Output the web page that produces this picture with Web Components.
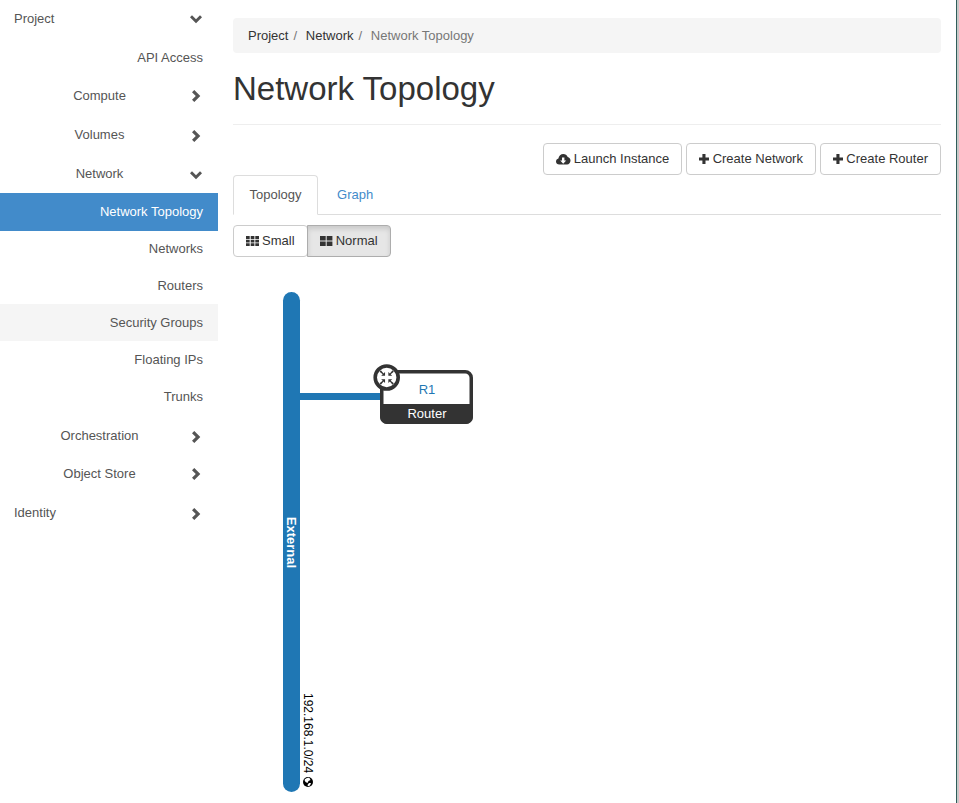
<!DOCTYPE html>
<html>
<head>
<meta charset="utf-8">
<title>Network Topology</title>
<style>
  html, body { margin: 0; height: 100%; background: #fff; }
  body { font: 13px/18.57px "Liberation Sans", Arial, sans-serif; color: #333; overflow: hidden; }
</style>
</head>
<body>
<app-shell>
  <side-nav slot="side">
    <nav-row kind="top" icon="down" h="38">Project</nav-row>
    <nav-row kind="leaf" h="39" nudge="2">API Access</nav-row>
    <nav-row kind="group" icon="right" h="38">Compute</nav-row>
    <nav-row kind="group" icon="right" h="39" nudge="2">Volumes</nav-row>
    <nav-row kind="group" icon="down" h="39" nudge="2">Network</nav-row>
    <nav-row kind="leaf" active h="38">Network Topology</nav-row>
    <nav-row kind="leaf" h="36">Networks</nav-row>
    <nav-row kind="leaf" h="37" nudge="2">Routers</nav-row>
    <nav-row kind="leaf" hover h="37" nudge="2">Security Groups</nav-row>
    <nav-row kind="leaf" h="37" nudge="2">Floating IPs</nav-row>
    <nav-row kind="leaf" h="37" nudge="2">Trunks</nav-row>
    <nav-row kind="group" icon="right" h="39" nudge="4">Orchestration</nav-row>
    <nav-row kind="group" icon="right" h="38" nudge="2">Object Store</nav-row>
    <nav-row kind="top" icon="right" h="39" nudge="4">Identity</nav-row>
  </side-nav>
  <bread-crumb><span>Project</span><span>Network</span><span>Network Topology</span></bread-crumb>
  <page-title>Network Topology</page-title>
  <action-bar>
    <action-button icon="cloud">Launch Instance</action-button>
    <action-button icon="plus">Create Network</action-button>
    <action-button icon="plus">Create Router</action-button>
  </action-bar>
  <tab-strip></tab-strip>
  <size-toggle></size-toggle>
  <topology-canvas></topology-canvas>
</app-shell>

<script>
// name: [width, height, path]
const ICONS = {
  down: [14, 14, '<path d="M1 5.200 3 3.200 7 7.200 11 3.200 13 5.200 7 11.200z"/>'],
  right: [14, 14, '<path d="M5.300 1 3 3.200 6.800 7 3 10.800 5.300 13 11.300 7z"/>'],
  plus: [9.800, 14, '<path d="M3.400 2h3.100v3.500h3.500v3H6.500V12H3.400V8.500H0v-3h3.400z"/>'],
  cloud: [14.500, 14, '<path fill-rule="evenodd" d="M3.300 12.500C1.400 12.500 0 11.100 0 9.400c0-1.500 1-2.700 2.400-3C2.800 3.900 4.800 2 7.300 2c2 0 3.700 1.200 4.400 3 1.600.2 2.800 1.700 2.800 3.500 0 2.200-1.500 4-3.400 4zM6 5.500v3H4.200l3 3.200 3-3.200H8.400v-3z"/>'],
  small: [12.500, 14, '<path d="M0 2h3.700v3H0zM4.700 2h3.700v3H4.700zM9.300 2H13v3H9.300zM0 5.700h3.700v2.800H0zM4.700 5.700h3.700v2.800H4.700zM9.300 5.700H13v2.800H9.300zM0 9.200h3.700V12H0zM4.700 9.200h3.700V12H4.700zM9.300 9.200H13V12H9.300z"/>'],
  normal: [12.500, 14, '<path d="M0 2h5.700v4.500H0zM6.700 2h5.700v4.500H6.700zM0 7.500h5.700V12H0zM6.700 7.500h5.700V12H6.700z"/>']
};

function icon(name) {
  const [w, h, body] = ICONS[name];
  return `<svg width="${w}" height="${h}" viewBox="0 0 ${w} ${h}" fill="currentColor">${body}</svg>`;
}

class AppShell extends HTMLElement {
  constructor() {
    super();
    this.attachShadow({ mode: "open" }).innerHTML = `
      <style>
        :host {
          display: grid;
          grid-template-columns: 218px 1fr;
          height: 803px;
          width: 959px;
          box-sizing: border-box;
          border-right: 2px solid #c8c8c8;
        }

        main {
          padding: 18px 15px 0;
          min-width: 0;
          border-right: 1px solid #2f5d5a;
        }
      </style>
      <slot name="side"></slot>
      <main><slot></slot></main>
    `;
  }
}

class SideNav extends HTMLElement {
  constructor() {
    super();
    this.attachShadow({ mode: "open" }).innerHTML = `
      <style>
        :host {
          display: flex;
          flex-direction: column;
        }
      </style>
      <slot></slot>
    `;
  }
}

class NavRow extends HTMLElement {
  constructor() {
    super();
    this.attachShadow({ mode: "open" }).innerHTML = `
      <style>
        :host {
          display: flex;
          align-items: center;
          box-sizing: border-box;
          padding: 0 15px 0 14px;
          color: #555;
          flex: none;
        }

        :host([kind="leaf"]) {
          justify-content: flex-end;
        }

        :host([kind="group"]) .label {
          flex: 1;
          text-align: center;
          margin-right: -10px;
        }

        :host([kind="top"]) .label {
          flex: 1;
        }

        :host([active]) {
          background: #428bca;
          color: #fff;
        }

        :host([hover]) {
          background: #f5f5f5;
        }

        svg {
          display: block;
          margin-left: 14px;
        }
      </style>
      <span class="label"><slot></slot></span>
    `;
  }

  connectedCallback() {
    this.style.height = this.getAttribute("h") + "px";
    this.style.paddingTop = (this.getAttribute("nudge") || 0) + "px";
    const name = this.getAttribute("icon");
    if (name && !this.shadowRoot.querySelector("svg")) {
      this.shadowRoot.querySelector(".label").insertAdjacentHTML("afterend", icon(name));
    }
  }
}

class BreadCrumb extends HTMLElement {
  constructor() {
    super();
    this.attachShadow({ mode: "open" }).innerHTML = `
      <style>
        :host {
          display: flex;
          height: 35px;
          box-sizing: border-box;
          align-items: center;
          padding: 2px 15px 0;
          background: #f5f5f5;
          border-radius: 4px;
        }

        ::slotted(span) {
          color: #333;
        }

        ::slotted(span:not(:last-child))::after {
          content: "/";
          color: #777;
          padding: 0 8.700px 0 5px;
        }

        ::slotted(span:last-child) {
          color: #777;
        }
      </style>
      <slot></slot>
    `;
  }
}

class PageTitle extends HTMLElement {
  constructor() {
    super();
    this.attachShadow({ mode: "open" }).innerHTML = `
      <style>
        :host {
          display: block;
          font-size: 33px;
          line-height: 36px;
          padding: 18px 0 17px;
          border-bottom: 1px solid #eee;
          color: #333;
        }
      </style>
      <slot></slot>
    `;
  }
}

class ActionBar extends HTMLElement {
  constructor() {
    super();
    this.attachShadow({ mode: "open" }).innerHTML = `
      <style>
        :host {
          display: flex;
          justify-content: flex-end;
          gap: 4px;
          margin-top: 18px;
        }
      </style>
      <slot></slot>
    `;
  }
}

class ActionButton extends HTMLElement {
  constructor() {
    super();
    this.attachShadow({ mode: "open" }).innerHTML = `
      <style>
        :host {
          display: inline-flex;
          align-items: center;
          gap: 3.6px;
          height: 32px;
          box-sizing: border-box;
          padding: 0 12px;
          border: 1px solid #ccc;
          border-radius: 4px;
          background: #fff;
          color: #333;
          white-space: nowrap;
        }

        :host([active]) {
          background: #e6e6e6;
          border-color: #adadad;
          box-shadow: inset 0 3px 5px rgba(0, 0, 0, .125);
        }

        svg {
          display: block;
          flex: none;
          overflow: visible;
        }
      </style>
      <slot></slot>
    `;
  }

  connectedCallback() {
    const name = this.getAttribute("icon");
    if (name && !this.shadowRoot.querySelector("svg")) {
      this.shadowRoot.querySelector("slot").insertAdjacentHTML("beforebegin", icon(name));
    }
  }
}

class TabStrip extends HTMLElement {
  constructor() {
    super();
    this.attachShadow({ mode: "open" }).innerHTML = `
      <style>
        :host {
          display: flex;
          height: 40px;
          box-sizing: border-box;
          border-bottom: 1px solid #ddd;
        }

        div {
          height: 40px;
          box-sizing: border-box;
          padding: 10px 15.500px;
          margin-right: 2.500px;
          border: 1px solid transparent;
          border-radius: 4px 4px 0 0;
          color: #428bca;
        }

        .on {
          color: #555;
          background: #fff;
          border-color: #ddd #ddd #fff;
        }
      </style>
      <div class="on">Topology</div>
      <div>Graph</div>
    `;
  }
}

class SizeToggle extends HTMLElement {
  constructor() {
    super();
    this.attachShadow({ mode: "open" }).innerHTML = `
      <style>
        :host {
          display: flex;
          margin-top: 10px;
        }

        action-button:first-child {
          border-radius: 4px 0 0 4px;
        }

        action-button:last-child {
          border-radius: 0 4px 4px 0;
          margin-left: -1px;
        }
      </style>
      <action-button icon="small">Small</action-button>
      <action-button icon="normal" active>Normal</action-button>
    `;
  }
}

// free canvas, viewBox uses page coordinates (canvas sits at 233,257)
class TopologyCanvas extends HTMLElement {
  constructor() {
    super();
    this.attachShadow({ mode: "open" }).innerHTML = `
      <style>
        :host {
          display: block;
        }

        svg {
          display: block;
          overflow: visible;
        }

        text {
          font-family: "Liberation Sans", Arial, sans-serif;
        }
      </style>
      <svg width="708" height="546" viewBox="233 257 708 546">
        <rect x="283" y="292" width="17" height="500" rx="8.500" fill="#1f77b4"/>
        <text transform="translate(287 542.500) rotate(90)" text-anchor="middle" font-size="13" font-weight="bold" fill="#fff">External</text>
        <text transform="translate(303.500 693) rotate(90)" font-size="12" fill="#000">192.168.1.0/24</text>
        <circle cx="308" cy="782" r="5" fill="#000"/>
        <path d="M304.500 780c1-1.800 3-2.800 5-2l1 2-2 1-1 2-2-1zM307.500 785l1.500-2 2 0-1 2.500-2 .8z" fill="#fff"/>
        <rect x="300" y="393" width="82" height="7" fill="#1f77b4"/>
        <rect x="381.750" y="371.750" width="89.500" height="50.500" rx="6" fill="#fff" stroke="#333" stroke-width="3.500"/>
        <path d="M380 404h93v13a7 7 0 0 1-7 7h-79a7 7 0 0 1-7-7z" fill="#333"/>
        <text x="427" y="394" text-anchor="middle" font-size="13" fill="#1f77b4">R1</text>
        <text x="427" y="418" text-anchor="middle" font-size="13" fill="#fff">Router</text>
        <circle cx="386.700" cy="377.500" r="11.500" fill="#fff" stroke="#333" stroke-width="3.600"/>
        <g fill="#333" transform="translate(386.700 377.500) scale(1.100)">
          <path d="M-1.500-1.500H-5L-3.600-2.900-6.500-5.300-5.300-6.500-2.900-3.600-1.500-5z"/>
          <path d="M1.500-1.500H5L3.600-2.900 6.500-5.300 5.300-6.500 2.900-3.600 1.500-5z"/>
          <path d="M-1.500 1.500H-5L-3.600 2.900-6.500 5.300-5.300 6.500-2.900 3.600-1.500 5z"/>
          <path d="M1.500 1.500H5L3.600 2.900 6.500 5.300 5.300 6.500 2.900 3.600 1.500 5z"/>
        </g>
      </svg>
    `;
  }
}

window.customElements.define("action-button", ActionButton);
window.customElements.define("app-shell", AppShell);
window.customElements.define("side-nav", SideNav);
window.customElements.define("nav-row", NavRow);
window.customElements.define("bread-crumb", BreadCrumb);
window.customElements.define("page-title", PageTitle);
window.customElements.define("action-bar", ActionBar);
window.customElements.define("tab-strip", TabStrip);
window.customElements.define("size-toggle", SizeToggle);
window.customElements.define("topology-canvas", TopologyCanvas);
</script>
</body>
</html>
